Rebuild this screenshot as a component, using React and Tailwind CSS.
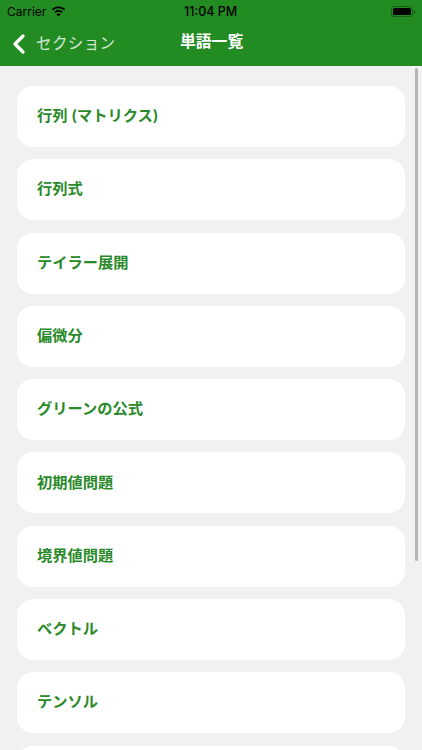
import React from "react";
import { ChevronLeft } from "lucide-react";

const WORDS = [
  "行列 (マトリクス)",
  "行列式",
  "テイラー展開",
  "偏微分",
  "グリーンの公式",
  "初期値問題",
  "境界値問題",
  "ベクトル",
  "テンソル",
  "",
];

const FONT = "font-['Inter','Noto_Sans_CJK_JP','Liberation_Sans',sans-serif]";

function StatusBar() {
  return (
    <div className="relative flex h-[22px] items-center justify-between pl-[7px] pr-[7px] pt-[1px] text-[12px] text-black">
      <div className="flex items-center gap-[5px]">
        <span className="font-normal">Carrier</span>
        <svg width="15" height="11" viewBox="0 0 15 11" fill="#000">
          <path d="M7.5 2.2c2.1 0 4 .8 5.5 2.2l1.1-1.2C12.3 1.5 10 .5 7.5.5S2.7 1.5.9 3.2L2 4.4c1.5-1.4 3.4-2.2 5.5-2.2z" />
          <path d="M7.5 5.7c1.2 0 2.2.4 3.1 1.2l1.1-1.2c-1.2-1-2.6-1.7-4.2-1.7s-3 .7-4.2 1.7l1.1 1.2c.9-.8 1.9-1.2 3.1-1.2z" />
          <path d="M7.5 7.4c-.9 0-1.6.3-2.2.8l2.2 2.4 2.2-2.4c-.6-.5-1.3-.8-2.2-.8z" />
        </svg>
      </div>
      <span className="absolute left-[184px] top-[3px] text-[12.5px] font-medium">11:04 PM</span>
      <div className="flex items-center gap-[1px]">
        <div className="flex h-[11px] w-[22px] items-center justify-center rounded-[3px] border border-black/30">
          <div className="h-[7.5px] w-[18.5px] rounded-[1.5px] bg-black" />
        </div>
        <div className="h-[4px] w-[1px] rounded-r bg-black/40" />
      </div>
    </div>
  );
}

function NavBar() {
  return (
    <div className="relative flex h-[43px] items-center">
      <ChevronLeft size={32} strokeWidth={2.5} className="ml-[3px] text-white" />
      <span className="ml-[1px] text-[15.5px] tracking-[0.4px] text-white/80">セクション</span>
      <span className="absolute left-[180px] top-[10px] text-[15.8px] font-semibold leading-[20px] text-white">単語一覧</span>
    </div>
  );
}

export default function App() {
  return (
    <div className={`relative h-[750px] w-[422px] overflow-hidden bg-[#f1f1f1] ${FONT}`}>
      <header className="h-[65.5px] bg-[#228b22]">
        <StatusBar />
        <NavBar />
      </header>

      <div className="flex flex-col gap-[12.3px] pl-[16.5px] pr-[17px] pt-[20.5px]">
        {WORDS.map((w, i) => (
          <div key={i} className="flex h-[61px] shrink-0 items-center rounded-[16px] bg-white pl-[20.5px]">
            <span className="text-[15.25px] font-semibold text-[#2a8a2a]">{w}</span>
          </div>
        ))}
      </div>

      {/* scroll indicator */}
      <div className="absolute left-[415px] top-[68px] h-[493px] w-[3px] rounded-full bg-[#b4b4b4]" />
    </div>
  );
}
